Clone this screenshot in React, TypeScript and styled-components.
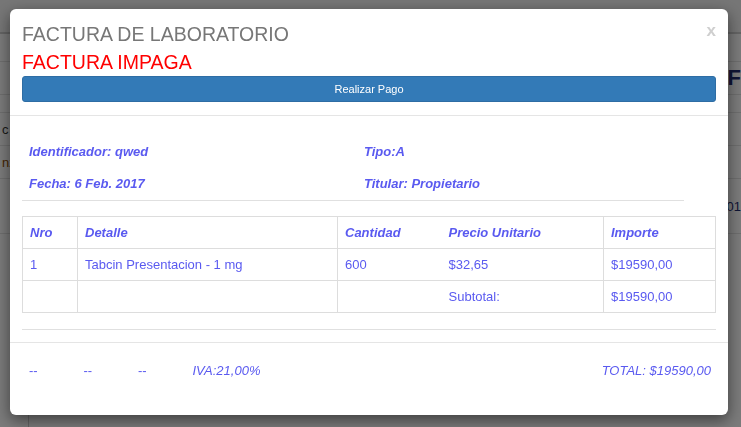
import React from "react";
import styled, { createGlobalStyle } from "styled-components";

const GlobalStyle = createGlobalStyle`
  html, body {
    margin: 0;
    padding: 0;
    background: #f4f4f4;
    font-family: "Liberation Sans", Arial, Helvetica, sans-serif;
    font-size: 13px;
  }
  * {
    box-sizing: border-box;
  }
`;

const blue = "#5a5af0";

/* page behind the dialog */
const Page = styled.div`
  width: 741px;
  height: 427px;
  overflow: hidden;
  background: #f6f6f6;
  display: flex;
  flex-direction: column;
`;

const NavBar = styled.div`
  height: 34px;
  background: #ececec;
  border-bottom: 2px solid #c8c8c8;
`;

const PageRow = styled.div<{ h: number }>`
  height: ${(p) => p.h}px;
  border-bottom: 1px solid #dcdcdc;
  display: flex;
  align-items: center;
  justify-content: space-between;
  padding: 0 0 0 2px;
  color: #333;
`;

const PageText = styled.span<{ color?: string; bold?: boolean }>`
  color: ${(p) => p.color || "#333"};
  font-weight: ${(p) => (p.bold ? 700 : 400)};
  font-size: ${(p) => (p.bold ? 22 : 13)}px;
`;

const PageBottom = styled.div`
  flex: 1;
  margin-left: 28px;
  border-left: 1px solid #c8c8c8;
`;

/* dialog */
const Backdrop = styled.div`
  position: fixed;
  inset: 0;
  background: rgba(0, 0, 0, 0.5);
  padding: 9px 0 0 10px;
`;

const Dialog = styled.div`
  position: relative;
  width: 718px;
  background: #fff;
  border-radius: 6px;
  box-shadow: 0 5px 15px rgba(0, 0, 0, 0.5);
`;

const Header = styled.div`
  padding: 11px 12px 13px;
  border-bottom: 1px solid #e5e5e5;
`;

const Title = styled.div<{ red?: boolean }>`
  font-size: 19.5px;
  line-height: 28px;
  color: ${(p) => (p.red ? "#ff0000" : "#777")};
`;

const Close = styled.button`
  position: absolute;
  top: 12px;
  right: 12px;
  border: 0;
  background: none;
  padding: 0;
  font-family: "Liberation Sans", Arial, sans-serif;
  font-size: 17px;
  font-weight: 700;
  line-height: 20px;
  color: #cfcfcf;
`;

const PayButton = styled.button`
  display: block;
  width: 100%;
  height: 26px;
  background: #337ab7;
  border: 1px solid #2e6da4;
  border-radius: 3px;
  color: #fff;
  font-family: "Liberation Sans", Arial, sans-serif;
  font-size: 11px;
`;

const Body = styled.div`
  padding: 20px 12px 12px;
`;

const InfoGrid = styled.div`
  width: 662px;
  display: grid;
  grid-template-columns: 335px 1fr;
  padding-left: 7px;
  border-bottom: 1px solid #e0e0e0;
`;

const InfoItem = styled.div`
  height: 32px;
  line-height: 32px;
  font-weight: 700;
  font-style: italic;
  color: ${blue};
`;

const Table = styled.table`
  width: 694px;
  margin: 15px 0 16px;
  border-collapse: collapse;
  table-layout: fixed;
  color: ${blue};
`;

const Cell = styled.td<{ w?: number; head?: boolean; noLeft?: boolean; noRight?: boolean }>`
  ${(p) => (p.w ? `width: ${p.w}px;` : "")}
  height: 32px;
  padding: 0 7px;
  border: 1px solid #dddddd;
  ${(p) => (p.noLeft ? "border-left: 0;" : "")}
  ${(p) => (p.noRight ? "border-right: 0;" : "")}
  font-weight: ${(p) => (p.head ? 700 : 400)};
  font-style: ${(p) => (p.head ? "italic" : "normal")};
  vertical-align: middle;
  white-space: nowrap;
`;

const Rule = styled.div`
  border-top: 1px solid #e0e0e0;
`;

const Footer = styled.div`
  display: flex;
  align-items: center;
  padding: 18px 17px 34px 19px;
  border-top: 1px solid #e5e5e5;
  line-height: 20px;
  color: ${blue};
`;

const Dash = styled.span`
  width: 54.5px;
`;

const FooterNote = styled.span`
  font-style: italic;
`;

const Total = styled.span`
  margin-left: auto;
  font-style: italic;
`;

const rows = [
  { nro: "1", detalle: "Tabcin Presentacion - 1 mg", cantidad: "600", precio: "$32,65", importe: "$19590,00" },
];

export default function App() {
  return (
    <>
      <GlobalStyle />
      <Page>
        <NavBar />
        <PageRow h={28} />
        <PageRow h={33}>
          <span />
          <PageText bold color="#1f2a6b">F</PageText>
        </PageRow>
        <PageRow h={18} />
        <PageRow h={33}>
          <PageText>c</PageText>
        </PageRow>
        <PageRow h={33}>
          <PageText color="#8a4a00">nz</PageText>
        </PageRow>
        <PageRow h={55}>
          <span />
          <PageText color="#1f2a6b">201</PageText>
        </PageRow>
        <PageBottom />
      </Page>
      <Backdrop>
        <Dialog>
          <Close>x</Close>
          <Header>
            <Title>FACTURA DE LABORATORIO</Title>
            <Title red>FACTURA IMPAGA</Title>
            <PayButton>Realizar Pago</PayButton>
          </Header>
          <Body>
            <InfoGrid>
              <InfoItem>Identificador: qwed</InfoItem>
              <InfoItem>Tipo:A</InfoItem>
              <InfoItem>Fecha: 6 Feb. 2017</InfoItem>
              <InfoItem>Titular: Propietario</InfoItem>
            </InfoGrid>
            <Table>
              <tbody>
                <tr>
                  <Cell head w={55}>Nro</Cell>
                  <Cell head w={260}>Detalle</Cell>
                  <Cell head noRight w={104}>Cantidad</Cell>
                  <Cell head noLeft w={162}>Precio Unitario</Cell>
                  <Cell head>Importe</Cell>
                </tr>
                {rows.map((r) => (
                  <tr key={r.nro}>
                    <Cell>{r.nro}</Cell>
                    <Cell>{r.detalle}</Cell>
                    <Cell noRight>{r.cantidad}</Cell>
                    <Cell noLeft>{r.precio}</Cell>
                    <Cell>{r.importe}</Cell>
                  </tr>
                ))}
                <tr>
                  <Cell />
                  <Cell />
                  <Cell noRight />
                  <Cell noLeft>Subtotal:</Cell>
                  <Cell>$19590,00</Cell>
                </tr>
              </tbody>
            </Table>
            <Rule />
          </Body>
          <Footer>
            <Dash>--</Dash>
            <Dash>--</Dash>
            <Dash>--</Dash>
            <FooterNote>IVA:21,00%</FooterNote>
            <Total>TOTAL: $19590,00</Total>
          </Footer>
        </Dialog>
      </Backdrop>
    </>
  );
}
